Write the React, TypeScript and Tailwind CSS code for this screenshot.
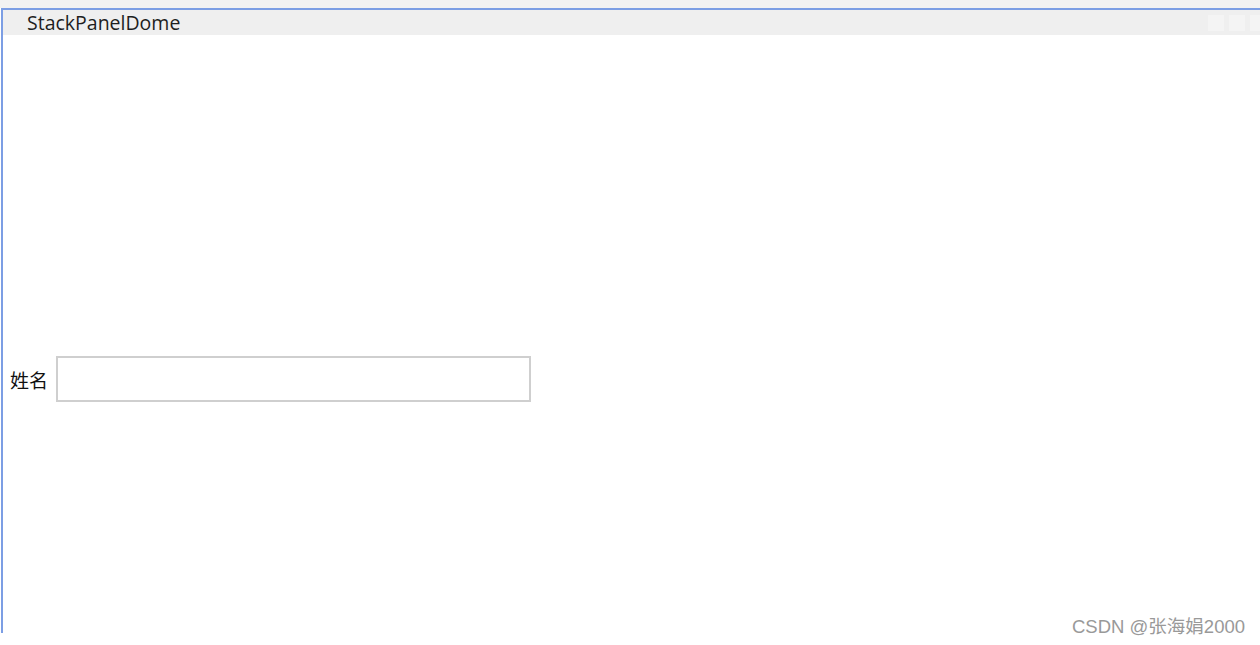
import React from "react";

export default function App() {
  return (
    <div className="relative w-[1260px] h-[645px] bg-white overflow-hidden">
      {/* faint top strip */}
      <div className="h-[8px] bg-[#f2f2f2]" />
      {/* window frame */}
      <div className="ml-[1px] h-[625px] border-l-2 border-t-2 border-[#7c9ee4] flex flex-col">
        {/* title bar */}
        <div className="h-[25px] bg-[#efefef] flex items-center pl-[24px] text-[19.5px] leading-none text-[#1e1e1e] font-['Open_Sans','Noto_Sans',sans-serif]">
          <span className="flex-1">StackPanelDome</span>
          {/* faded caption buttons */}
          <div className="flex gap-[5px] -mr-[6px]">
            <div className="w-[16px] h-[16px] bg-[#f4f4f4]" />
            <div className="w-[16px] h-[16px] bg-[#f4f4f4]" />
            <div className="w-[16px] h-[16px] bg-[#f4f4f4]" />
          </div>
        </div>
        {/* content */}
        <div className="flex-1 bg-white pt-[321px] pl-[7px]">
          <div className="flex items-center gap-[8px]">
            <span className="text-[19px] leading-none text-[#111] font-['Noto_Sans_CJK_SC',sans-serif]">
              姓名
            </span>
            <input
              type="text"
              className="w-[475px] h-[46px] border-2 border-[#cfcfcf] bg-white outline-none"
            />
          </div>
        </div>
      </div>
      {/* watermark */}
      <div className="absolute right-[15px] top-[615px] text-[18.5px] leading-[24px] text-[#999] font-['Liberation_Sans','Noto_Sans_CJK_SC',sans-serif]">
        CSDN @张海娟2000
      </div>
    </div>
  );
}
